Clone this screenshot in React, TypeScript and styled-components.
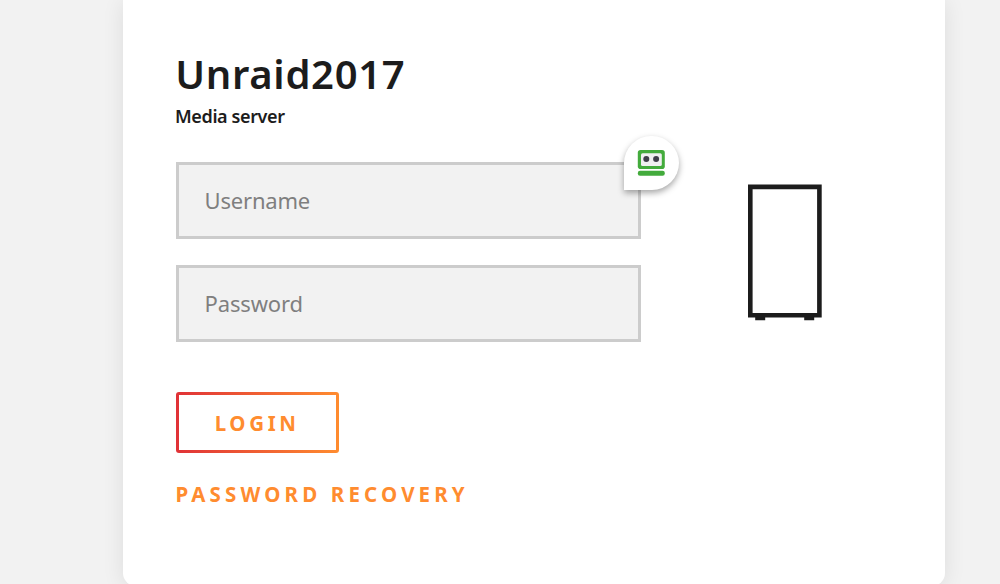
import React from "react";
import styled, { createGlobalStyle } from "styled-components";

const GlobalStyle = createGlobalStyle`
  * {
    box-sizing: border-box;
  }

  body {
    margin: 0;
    overflow: hidden;
    background: #f2f2f2;
    color: #1c1c1c;
    font-family: "Noto Sans", "Open Sans", sans-serif;
  }
`;

const App = () => {
  return (
    <>
      <GlobalStyle />
      <Page>
        <Card>
          <FormColumn>
            <ServerName>Unraid2017</ServerName>
            <ServerComment>Media server</ServerComment>
            <Field>
              <Input type="text" placeholder="Username" $spacing={-0.2} />
              <PasswordManagerBadge>
                <RobotIcon />
              </PasswordManagerBadge>
            </Field>
            <Field>
              <Input type="password" placeholder="Password" $spacing={-0.15} />
            </Field>
            <LoginButton type="button">Login</LoginButton>
            <RecoveryLink href="#">Password recovery</RecoveryLink>
          </FormColumn>
          <CaseColumn>
            <CaseIcon />
          </CaseColumn>
        </Card>
      </Page>
    </>
  );
};

const RobotIcon = () => (
  <svg width="28" height="27" viewBox="0 0 28 27">
    <rect x="0.8" y="0" width="27" height="19" rx="2.8" fill="#43ab3c" />
    <rect x="4" y="3.2" width="20.8" height="12.8" rx="1.6" fill="#f0f0f1" />
    <circle cx="9.3" cy="9" r="3" fill="#3f3e4a" />
    <circle cx="19.1" cy="9" r="3" fill="#3f3e4a" />
    <rect x="0.8" y="20.8" width="27" height="5" rx="2.2" fill="#43ab3c" />
  </svg>
);

const CaseIcon = () => (
  <svg width="74" height="137" viewBox="0 0 74 137" fill="#1c1c1c">
    <path
      fillRule="evenodd"
      d="M0 0.5H73.7V133.4H66.2V136.2H56.2V133.4H17.2V136.2H7.2V133.4H0ZM4.6 5.3V129H69.1V5.3Z"
    />
  </svg>
);

const Page = styled.div`
  height: 584px;
  padding-left: 123px;
  overflow: hidden;
`;

const Card = styled.main`
  display: flex;
  width: 822px;
  height: 586px;
  padding: 50px 0 0 52.6px;
  border-radius: 0 0 13px 13px;
  background: #fff;
  box-shadow: 0 2px 22px rgba(0, 0, 0, 0.09);
`;

const FormColumn = styled.form`
  display: flex;
  flex-direction: column;
  align-items: flex-start;
  width: 465px;
`;

const ServerName = styled.h1`
  margin: 0 0 0 -0.4px;
  font-size: 40px;
  font-weight: 600;
  line-height: 48px;
  letter-spacing: 0.7px;
  white-space: nowrap;
`;

const ServerComment = styled.h2`
  margin: 6px 0 34px -0.6px;
  font-size: 18px;
  font-weight: 600;
  line-height: 24px;
  letter-spacing: -0.38px;
`;

const Field = styled.div`
  position: relative;
  width: 100%;
  margin-bottom: 26px;
`;

const Input = styled.input<{ $spacing: number }>`
  display: block;
  width: 100%;
  height: 77px;
  padding: 0 27px 2px 26px;
  border: 3px solid #ccc;
  border-radius: 0;
  background: #f2f2f2;
  font-family: inherit;
  font-size: 22px;
  letter-spacing: ${({ $spacing }) => $spacing}px;

  &::placeholder {
    color: #7f7f7f;
    opacity: 1;
  }
`;

const PasswordManagerBadge = styled.div`
  position: absolute;
  top: -26px;
  left: 448.4px;
  display: flex;
  align-items: center;
  justify-content: center;
  width: 55px;
  height: 54px;
  border-radius: 27px 27px 27px 0;
  background: #fff;
  box-shadow: 0 3px 6px rgba(0, 0, 0, 0.35);
`;

const LoginButton = styled.button`
  width: 163px;
  height: 61px;
  margin-top: 24px;
  padding: 0;
  border: 3px solid transparent;
  border-radius: 3px;
  background: linear-gradient(#fff, #fff) padding-box,
    linear-gradient(90deg, #e03237 0%, #ff8c2f 100%) border-box;
  color: #ff8c2f;
  font-family: inherit;
  font-size: 20.5px;
  font-weight: 700;
  letter-spacing: 3.6px;
  text-transform: uppercase;
`;

const RecoveryLink = styled.a`
  margin: 27px 0 0 -0.2px;
  color: #ff8c2f;
  font-size: 20.5px;
  font-weight: 700;
  line-height: 28px;
  letter-spacing: 4.15px;
  text-decoration: none;
  text-transform: uppercase;
  white-space: nowrap;
`;

const CaseColumn = styled.div`
  padding: 134px 0 0 107.4px;

  svg {
    display: block;
  }
`;

export default App;
